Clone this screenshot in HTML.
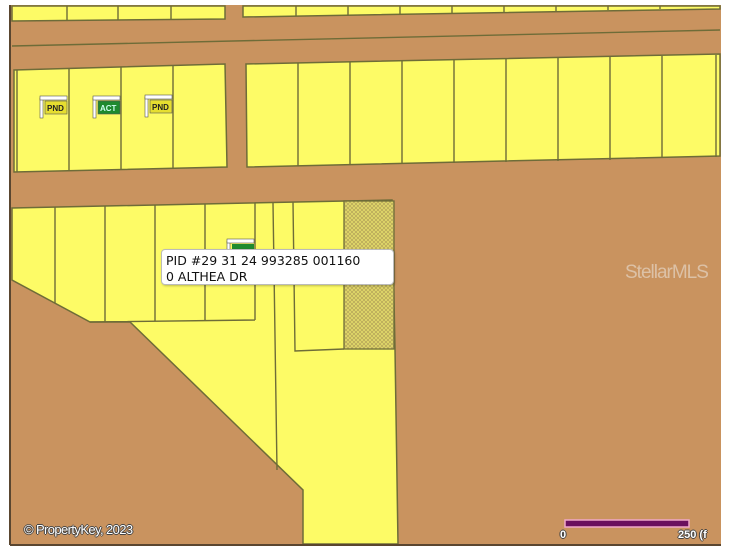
<!DOCTYPE html>
<html><head><meta charset="utf-8"><style>
html,body{margin:0;padding:0;background:#fff;width:729px;height:547px;overflow:hidden;position:relative;font-family:"Liberation Sans",sans-serif}
svg{position:absolute;left:0;top:0}
.tip{position:absolute;left:161px;top:249px;width:233px;height:36px;background:#fff;border:1px solid #bbb;border-radius:4px;box-shadow:1px 1px 2px rgba(0,0,0,.25);font-family:"DejaVu Sans",sans-serif;font-size:12.5px;line-height:16px;color:#111;padding:3px 0 0 4px;box-sizing:border-box}
.wm{position:absolute;left:625px;top:262px;font-size:19px;color:rgba(228,212,196,.7);letter-spacing:-1px}
.cp{position:absolute;left:24px;top:522px;font-size:13px;color:#fff;letter-spacing:-0.6px;text-shadow:-1px 0 #444,1px 0 #444,0 -1px #444,0 1px #444}
.sc{position:absolute;font-size:11px;color:#fff;font-weight:bold;text-shadow:-1px 0 #444,1px 0 #444,0 -1px #444,0 1px #444}
</style></head><body>
<svg width="729" height="547" viewBox="0 0 729 547">
<defs>
<pattern id="h" width="4" height="4" patternUnits="userSpaceOnUse">
<rect width="4" height="4" fill="#e4dc6a"/><path d="M0 0L4 4M4 0L0 4" stroke="#b9a95a" stroke-width="0.8"/>
</pattern>
</defs>
<rect x="10" y="5" width="711" height="540" fill="#c9935f"/>
<g fill="#fdfb66" stroke="#6e6c38" stroke-width="1.5">
<polygon points="12,6 225,6 225,19 12,21"/>
<polygon points="243,6 720,6 720,9 243,17"/>
<polygon points="14,70 225,64 227,167 14,172"/>
<polygon points="246,64 720,54 720,156 247,167"/>
<polygon points="12,208 392,200 395,349 398,544 303,544 303,490 130,322 90,322 12,280"/>
</g>
<rect x="344" y="201" width="50" height="148" fill="url(#h)" stroke="#6e6c38" stroke-width="1.3"/>
<g stroke="#6e6c38" stroke-width="1.4" fill="none">
<path d="M67 6V20M118 6V20M171 6V20M296 6V16M348 6V15M400 6V14M452 6V13M504 6V12M556 6V11M608 6V10M660 6V9"/>
<path d="M12 46L720 30"/>
<path d="M17 70V172M69 68V171M121 67V170M173 66V169"/>
<path d="M298 63V166M350 62V165M402 61V164M454 60V163M506 59V162M558 58V161M610 57V160M662 56V158M716 55V157"/>
<path d="M55 207V303M105 206V322M155 205V321M205 204V320M255 203V320M90 322L255 320"/>
<path d="M273 203L277 470M293 202L295 351L344 349"/>
</g>
<path d="M10 5V545M10 545H721" stroke="#5a4630" stroke-width="2"/>
<g>
<g transform="translate(40,96)"><rect x="0" y="2" width="3" height="20" fill="#fff" stroke="#555" stroke-width=".6"/><rect x="0" y="0" width="27" height="4" fill="#fff" stroke="#555" stroke-width=".6"/><rect x="5" y="5" width="22" height="13" fill="#e6de30" stroke="#555" stroke-width=".6"/><text x="7" y="15" font-size="8" font-weight="bold" fill="#222" font-family="Liberation Sans">PND</text></g>
<g transform="translate(93,96)"><rect x="0" y="2" width="3" height="20" fill="#fff" stroke="#555" stroke-width=".6"/><rect x="0" y="0" width="27" height="4" fill="#fff" stroke="#555" stroke-width=".6"/><rect x="5" y="5" width="22" height="13" fill="#1e8a2e" stroke="#555" stroke-width=".6"/><text x="7" y="15" font-size="8" font-weight="bold" fill="#cfe" font-family="Liberation Sans">ACT</text></g>
<g transform="translate(145,95)"><rect x="0" y="2" width="3" height="20" fill="#fff" stroke="#555" stroke-width=".6"/><rect x="0" y="0" width="27" height="4" fill="#fff" stroke="#555" stroke-width=".6"/><rect x="5" y="5" width="22" height="13" fill="#e6de30" stroke="#555" stroke-width=".6"/><text x="7" y="15" font-size="8" font-weight="bold" fill="#222" font-family="Liberation Sans">PND</text></g>
<g transform="translate(227,239)"><rect x="0" y="2" width="3" height="12" fill="#fff" stroke="#555" stroke-width=".6"/><rect x="0" y="0" width="27" height="4" fill="#fff" stroke="#555" stroke-width=".6"/><rect x="5" y="5" width="22" height="8" fill="#1e8a2e"/></g>
</g>
<rect x="565" y="520" width="124" height="7" fill="#6b0f5e" stroke="#f0a8c8" stroke-width="1.5"/>
</svg>
<div class="tip">PID #29 31 24 993285 001160<br>0 ALTHEA DR</div>
<div class="wm">StellarMLS</div>
<div class="cp">© PropertyKey, 2023</div>
<div class="sc" style="left:560px;top:529px">0</div>
<div class="sc" style="left:678px;top:529px">250 (f</div>
</body></html>
